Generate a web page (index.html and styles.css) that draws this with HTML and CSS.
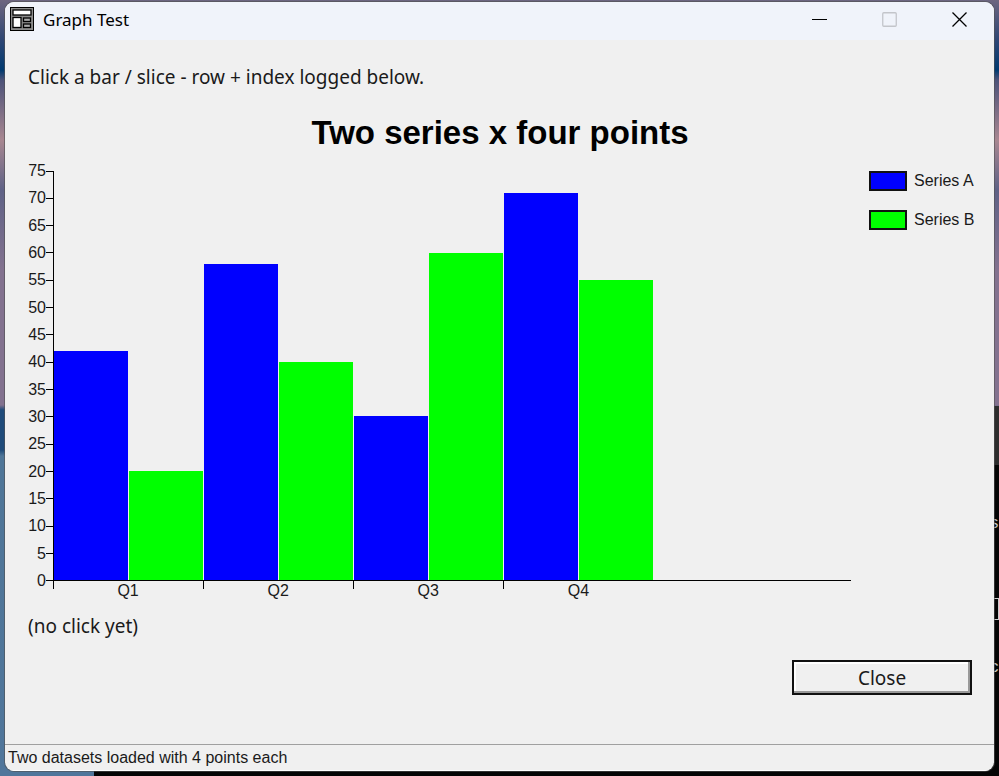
FILE: index.html
```html
<!DOCTYPE html>
<html lang="en">
<head>
    <meta charset="UTF-8">
    <title>Graph Test</title>
    <link rel="stylesheet" href="styles.css">
</head>
<body>
    <div class="terminal" aria-hidden="true">
        <span>s</span>
        <span class="cursor"></span>
        <span>c</span>
    </div>
    <div class="window">
        <header class="titlebar">
            <svg class="app-icon" width="24" height="24" viewBox="0 0 24 24">
                <rect width="24" height="24" fill="#000"/>
                <rect x="1" y="1" width="22" height="22" fill="#8c8c8c"/>
                <g fill="#fff" stroke="#000" stroke-width="1.3">
                    <rect x="3" y="3" width="18" height="5"/>
                    <rect x="3" y="10.5" width="8" height="10"/>
                    <rect x="13.5" y="11" width="7" height="3.5" fill="#aaa"/>
                    <rect x="13.5" y="17" width="7" height="3.5" fill="#aaa"/>
                </g>
            </svg>
            <span class="caption">Graph Test</span>
            <button class="win-btn" aria-label="Minimize">
                <svg width="15" height="15" viewBox="0 0 15 15"><path d="M0 7.5h15" stroke="#000"/></svg>
            </button>
            <button class="win-btn" aria-label="Maximize" disabled>
                <svg width="15" height="15" viewBox="0 0 15 15"><rect x=".75" y=".75" width="13.5" height="13.5" rx="1" fill="none" stroke="#c3c5ca" stroke-width="1.3"/></svg>
            </button>
            <button class="win-btn" aria-label="Close window">
                <svg width="15" height="15" viewBox="0 0 15 15"><path d="M.5 .5l14 14M14.5 .5l-14 14" stroke="#000" stroke-width="1.3"/></svg>
            </button>
        </header>
        <main class="content">
            <p class="label">Click a bar / slice - row + index logged below.</p>
            <h1 class="chart-title">Two series x four points</h1>
            <div class="chart">
                <ul class="y-axis">
                    <li>75</li>
                    <li>70</li>
                    <li>65</li>
                    <li>60</li>
                    <li>55</li>
                    <li>50</li>
                    <li>45</li>
                    <li>40</li>
                    <li>35</li>
                    <li>30</li>
                    <li>25</li>
                    <li>20</li>
                    <li>15</li>
                    <li>10</li>
                    <li>5</li>
                    <li>0</li>
                </ul>
                <div class="plot">
                    <div class="group">
                        <div class="bar series-a" style="height: 56%"></div>
                        <div class="bar series-b" style="height: 26.67%"></div>
                    </div>
                    <div class="group">
                        <div class="bar series-a" style="height: 77.33%"></div>
                        <div class="bar series-b" style="height: 53.33%"></div>
                    </div>
                    <div class="group">
                        <div class="bar series-a" style="height: 40%"></div>
                        <div class="bar series-b" style="height: 80%"></div>
                    </div>
                    <div class="group">
                        <div class="bar series-a" style="height: 94.67%"></div>
                        <div class="bar series-b" style="height: 73.33%"></div>
                    </div>
                </div>
                <ul class="legend">
                    <li><span class="swatch series-a"></span>Series A</li>
                    <li><span class="swatch series-b"></span>Series B</li>
                </ul>
                <ul class="x-axis">
                    <li>Q1</li>
                    <li>Q2</li>
                    <li>Q3</li>
                    <li>Q4</li>
                </ul>
            </div>
            <p class="label log" id="log">(no click yet)</p>
            <button class="close-btn">Close</button>
        </main>
        <footer class="statusbar">Two datasets loaded with 4 points each</footer>
    </div>
    <script>
        const log = document.getElementById('log');
        const groups = document.querySelectorAll('.group');
        groups.forEach((group, index) => {
            [...group.children].forEach((bar, row) => {
                bar.addEventListener('click', () => {
                    log.textContent = 'row ' + (row + 1) + ', index ' + (index + 1);
                });
            });
        });
    </script>
</body>
</html>
```
FILE: styles.css
```css
* {
    box-sizing: border-box;
}
body {
    display: flex;
    min-height: 100vh;
    margin: 0;
    padding: 2px 5px 5px;
    background: linear-gradient(#6d6680 0, #2e4674 40px, #003a70 70px, #4d5379 80px, #a88791 140px, #5f6286 190px, #83728f 270px, #83728f 405px, #1f4b7a 410px, #1f4b7a 450px, #4f7698 456px, #50769b 100%);
    color: #1a1a1a;
    font-family: "Noto Sans", "Open Sans", sans-serif;
}
ul {
    margin: 0;
    padding: 0;
    list-style: none;
}
.terminal {
    position: absolute;
    top: 406px;
    right: 0;
    bottom: 0;
    left: 94px;
    display: flex;
    flex-direction: column;
    align-items: flex-end;
    padding-top: 106px;
    overflow: hidden;
    background: linear-gradient(#2d2d2d 59px, #050505 59px);
    color: #ccc;
    font: 16px/24px "Liberation Mono", monospace;
}
.terminal .cursor {
    width: 6px;
    height: 22px;
    margin: 62px 0 36px;
    border: 1px solid #ccc;
}

/* window frame */
.window {
    position: relative;
    flex: 1;
    display: flex;
    flex-direction: column;
    overflow: hidden;
    border-radius: 9px;
    background: #f0f0f0;
    box-shadow: 0 0 0 1px rgba(80, 80, 80, .6);
}
.titlebar {
    display: flex;
    align-items: center;
    height: 38px;
    padding: 0 0 4px 5px;
    background: #f0f3fa;
}
.caption {
    flex: 1;
    padding-left: 9px;
    color: #000;
    font-size: 17px;
}
.win-btn {
    display: grid;
    place-items: center;
    width: 70px;
    height: 34px;
    padding: 0;
    border: none;
    background: none;
}
.content {
    flex: 1;
    display: flex;
    flex-direction: column;
    padding: 25px 22px 0 23px;
}
.label {
    margin: 0;
    font-size: 19px;
    line-height: 24px;
}

/* chart */
.chart-title {
    margin: 24px 0 18px;
    color: #000;
    font: bold 33px/40px "Liberation Sans", sans-serif;
    text-align: center;
}
.chart {
    display: grid;
    grid-template-columns: 25px 1fr 121px;
    grid-template-rows: 410px 20px;
    font: 16px/20px "Liberation Sans", sans-serif;
}
.y-axis {
    display: flex;
    flex-direction: column;
    justify-content: space-between;
    margin: -10px 0;
}
.y-axis li {
    display: flex;
    align-items: center;
    justify-content: flex-end;
}
.y-axis li::after {
    content: "";
    width: 7px;
    height: 1px;
    background: #000;
}
.plot,
.x-axis {
    display: grid;
    grid-template-columns: repeat(4, 19fr) 25fr;
}
.plot {
    border-bottom: 1px solid #000;
    border-left: 1px solid #000;
}
.group {
    display: flex;
    align-items: flex-end;
}
.bar {
    flex: 1;
    margin-right: 1px;
}
.series-a {
    background: #00f;
}
.series-b {
    background: #0f0;
}
.x-axis {
    grid-column: 2;
}
.x-axis li {
    background: linear-gradient(#000, #000) 0 0 / 1px 8px no-repeat;
    text-align: center;
}
.legend {
    display: flex;
    flex-direction: column;
    gap: 19px;
    padding-left: 18px;
}
.legend li {
    display: flex;
    align-items: center;
    gap: 7px;
    height: 20px;
    white-space: nowrap;
}
.swatch {
    flex: none;
    width: 38px;
    height: 20px;
    border: 2px solid #111;
}

.log {
    margin-top: 13px;
}
.close-btn {
    align-self: flex-end;
    width: 180px;
    height: 35px;
    margin-top: 22px;
    padding: 0;
    border: 2px solid #111;
    background: #f0f0f0;
    box-shadow: inset -2px -2px #999, inset 2px 2px #fff;
    color: #1a1a1a;
    font: 19px/24px "Noto Sans", "Open Sans", sans-serif;
}
.statusbar {
    height: 27px;
    padding-left: 3px;
    border-top: 1px solid #a0a0a0;
    border-bottom: 1px solid #fff;
    font: 16px/25px "Liberation Sans", sans-serif;
}
```
